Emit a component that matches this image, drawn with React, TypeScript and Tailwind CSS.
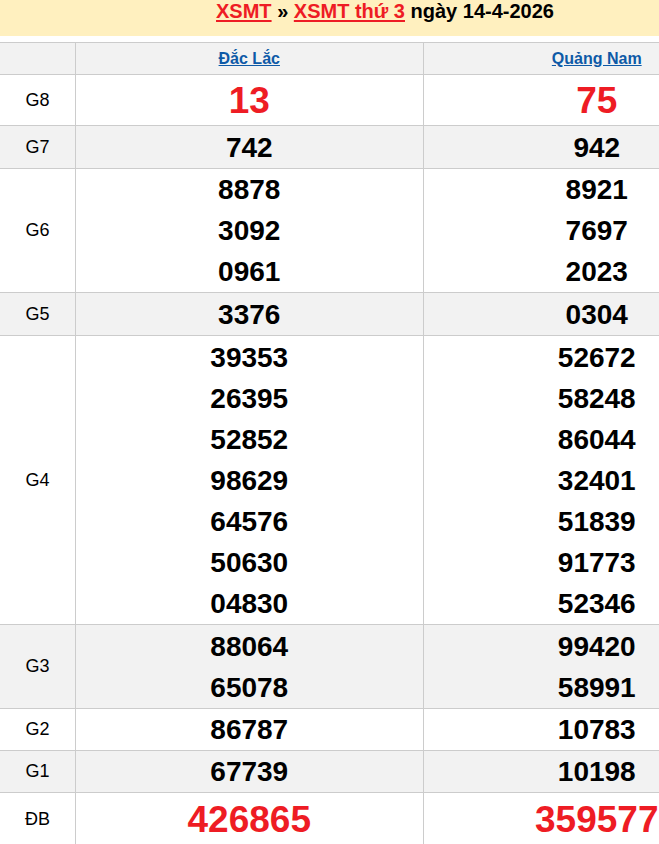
import React from "react";

type Row = {
  label: string;
  a: string[];
  b: string[];
  gray: boolean;
  red?: boolean;
  h: string;
};

const rows: Row[] = [
  { label: "G8", a: ["13"], b: ["75"], gray: false, red: true, h: "h-[51px]" },
  { label: "G7", a: ["742"], b: ["942"], gray: true, h: "h-[43px]" },
  { label: "G6", a: ["8878", "3092", "0961"], b: ["8921", "7697", "2023"], gray: false, h: "h-[124px]" },
  { label: "G5", a: ["3376"], b: ["0304"], gray: true, h: "h-[43px]" },
  {
    label: "G4",
    a: ["39353", "26395", "52852", "98629", "64576", "50630", "04830"],
    b: ["52672", "58248", "86044", "32401", "51839", "91773", "52346"],
    gray: false,
    h: "h-[289px]",
  },
  { label: "G3", a: ["88064", "65078"], b: ["99420", "58991"], gray: true, h: "h-[84px]" },
  { label: "G2", a: ["86787"], b: ["10783"], gray: false, h: "h-[42px]" },
  { label: "G1", a: ["67739"], b: ["10198"], gray: true, h: "h-[42px]" },
  { label: "ĐB", a: ["426865"], b: ["359577"], gray: false, red: true, h: "h-[54px]" },
];

function Cell({ nums, red }: { nums: string[]; red?: boolean }) {
  return (
    <div className="flex flex-col justify-center border-l border-[#cccccc] text-center">
      {nums.map((n) => (
        <div
          key={n}
          className={
            red
              ? "text-[37px] font-bold leading-[41px] text-[#ee1c24]"
              : "text-[28px] font-bold leading-[41px] text-black"
          }
        >
          {n}
        </div>
      ))}
    </div>
  );
}

export default function App() {
  return (
    <div
      className="w-[659px] overflow-hidden bg-white"
      style={{ fontFamily: '"Liberation Sans", Arial, sans-serif' }}
    >
      <div className="w-[770px]">
        <div className="h-[36px] bg-[#fff0bf] text-center text-[20px] font-bold leading-[22px] text-black">
          <a className="text-[#ee1c24] underline decoration-[2px] underline-offset-[2px]">XSMT</a>
          <span> » </span>
          <a className="text-[#ee1c24] underline decoration-[2px] underline-offset-[2px]">XSMT thứ 3</a>
          <span> ngày 14-4-2026</span>
        </div>
        <div className="mt-[6px] border-t border-[#cccccc]">
          <div className="grid h-[32px] grid-cols-[75px_1fr_1fr] border-b border-[#cccccc] bg-[#f2f2f2]">
            <div />
            <div className="flex items-center justify-center border-l border-[#cccccc] text-[16px] font-bold text-[#0e5aa7] underline">
              Đắc Lắc
            </div>
            <div className="flex items-center justify-center border-l border-[#cccccc] text-[16px] font-bold text-[#0e5aa7] underline">
              Quảng Nam
            </div>
          </div>
          {rows.map((r) => (
            <div
              key={r.label}
              className={
                "grid grid-cols-[75px_1fr_1fr] border-b border-[#cccccc] " +
                r.h +
                (r.gray ? " bg-[#f2f2f2]" : " bg-white")
              }
            >
              <div className="flex items-center justify-center text-[18px] text-black">{r.label}</div>
              <Cell nums={r.a} red={r.red} />
              <Cell nums={r.b} red={r.red} />
            </div>
          ))}
        </div>
      </div>
    </div>
  );
}
